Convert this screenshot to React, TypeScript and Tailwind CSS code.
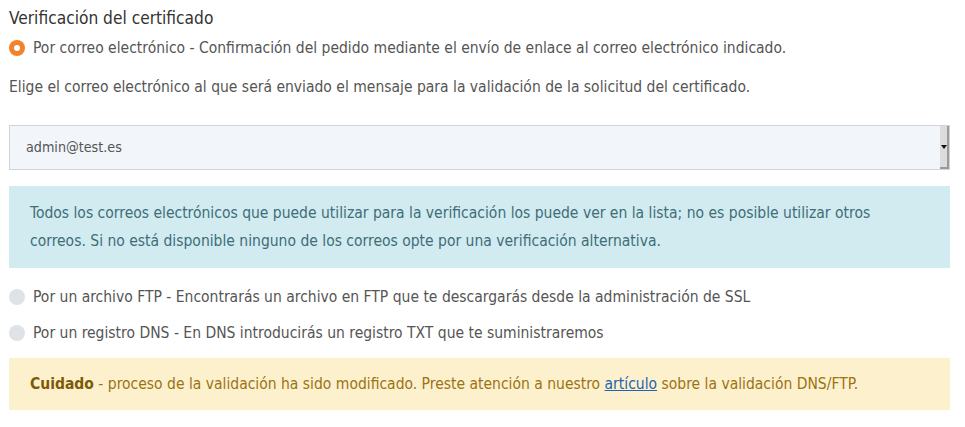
const font = "font-['Liberation_Sans_Narrow','DejaVu_Sans_Condensed',sans-serif]";

function Radio({ checked, label }: { checked?: boolean; label: string }) {
  return (
    <label className="flex h-6 items-center gap-2 text-[15.5px] leading-6 text-[#555]">
      {checked ? (
        <span className="flex h-4 w-4 shrink-0 items-center justify-center rounded-full bg-[#f1832d]">
          <span className="h-1.5 w-1.5 rounded-full bg-white" />
        </span>
      ) : (
        <span className="h-4 w-4 shrink-0 rounded-full bg-[#dfe2e7]" />
      )}
      <span>{label}</span>
    </label>
  );
}

export default function App() {
  return (
    <div className={`min-h-screen bg-white ${font}`}>
      <div className="ml-[9px] w-[941px] pt-[6px]">
        <h3 className="text-[17.2px] leading-6 text-[#333]">Verificación del certificado</h3>

        <div className="mt-[6px]">
          <Radio checked label="Por correo electrónico - Confirmación del pedido mediante el envío de enlace al correo electrónico indicado." />
        </div>

        <p className="mt-[15px] text-[15.5px] leading-6 text-[#555]">
          Elige el correo electrónico al que será enviado el mensaje para la validación de la solicitud del certificado.
        </p>

        <div className="mt-[26px] flex h-[45px] items-stretch border border-[#cfd3da] bg-[#f2f5fa]">
          <div className="flex flex-1 items-center pl-4 text-[14.2px] text-[#555]">admin@test.es</div>
          <div className="flex w-[9px] items-center justify-center border-r-2 border-b-2 border-[#9a9a9a] bg-[#dcdcdc]">
            <svg width="6" height="4" viewBox="0 0 6 4" className="shrink-0">
              <path d="M0 0h6L3 4z" fill="#111" />
            </svg>
          </div>
        </div>

        <div className="mt-4 bg-[#d1ebf0] px-[21px] py-[13px] text-[15.5px] leading-7 text-[#3f6d78]">
          Todos los correos electrónicos que puede utilizar para la verificación los puede ver en la lista; no es posible utilizar otros
          correos. Si no está disponible ninguno de los correos opte por una verificación alternativa.
        </div>

        <div className="mt-[17px] flex flex-col gap-3">
          <Radio label="Por un archivo FTP - Encontrarás un archivo en FTP que te descargarás desde la administración de SSL" />
          <Radio label="Por un registro DNS - En DNS introducirás un registro TXT que te suministraremos" />
        </div>

        <div className="mt-[13px] bg-[#fdf1cd] px-[21px] py-[14px] text-[15.5px] leading-6 text-[#9a7313]">
          <b className="font-bold text-[#7d5a06]">Cuidado</b> - proceso de la validación ha sido modificado. Preste atención a nuestro{" "}
          <a href="#" className="text-[#1f63b0] underline">artículo</a> sobre la validación DNS/FTP.
        </div>
      </div>
    </div>
  );
}
